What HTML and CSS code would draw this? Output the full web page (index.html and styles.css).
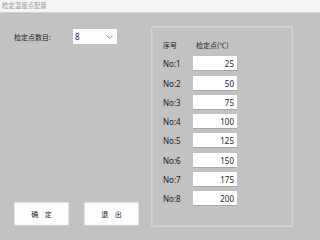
FILE: index.html
```html
<!DOCTYPE html>
<html lang="zh">
<head>
<meta charset="utf-8">
<link rel="stylesheet" href="styles.css">
</head>
<body>
<div class="window">
  <div class="titlebar">检定温度点配置</div>
  <div class="main">
    <div class="left">
      <div class="count-row">
        <span class="label cjk">检定点数目:</span>
        <div class="select">
          <span class="select-val">8</span>
          <svg class="chev" width="7" height="4" viewBox="0 0 7 4"><path d="M0.5 0.5 L3.5 3.3 L6.5 0.5" fill="none" stroke="#8a8a8a" stroke-width="0.9"/></svg>
        </div>
      </div>
      <div class="buttons">
        <button class="btn cjk">确&nbsp;&nbsp;&nbsp;&nbsp;定</button>
        <button class="btn cjk">退&nbsp;&nbsp;&nbsp;&nbsp;出</button>
      </div>
    </div>
    <div class="group">
      <div class="grid">
        <div class="hdr cjk">序号</div>
        <div class="hdr hdr2 cjk">检定点(℃)</div>
        <div class="no">No:1</div><div class="inp">25</div>
        <div class="no">No:2</div><div class="inp">50</div>
        <div class="no">No:3</div><div class="inp">75</div>
        <div class="no">No:4</div><div class="inp">100</div>
        <div class="no">No:5</div><div class="inp">125</div>
        <div class="no">No:6</div><div class="inp">150</div>
        <div class="no">No:7</div><div class="inp">175</div>
        <div class="no">No:8</div><div class="inp">200</div>
      </div>
    </div>
  </div>
</div>
</body>
</html>
```
FILE: styles.css
```css
html, body {
  margin: 0;
  padding: 0;
  background: #c2c2c2;
}
body {
  height: 238px;
  font-family: "Noto Sans", "Noto Sans CJK SC", sans-serif;
  font-size: 8px;
  color: #1e1e1e;
  overflow: hidden;
}
.window {
  display: flex;
  flex-direction: column;
  height: 238px;
}
.cjk {
  font-family: "Noto Sans CJK SC", sans-serif;
  font-size: 7px;
}
.titlebar {
  box-sizing: border-box;
  height: 13px;
  line-height: 12px;
  background: #f4f4f4;
  border-bottom: 1px solid #d4d4d4;
  color: #9a9a9a;
  font-family: "Noto Sans CJK SC", sans-serif;
  font-size: 6.4px;
  padding-left: 2px;
}
.main {
  flex: 1;
  display: flex;
  padding-top: 13px;
}
.left {
  width: 137px;
  padding-left: 14px;
  display: flex;
  flex-direction: column;
  justify-content: space-between;
  padding-bottom: 12px;
}
.count-row {
  display: flex;
  align-items: center;
  margin-top: 3px;
  height: 15px;
}
.label {
  width: 59px;
  color: #1e1e1e;
}
.select {
  width: 44px;
  height: 15px;
  background: #fdfdfd;
  box-sizing: border-box;
  display: flex;
  align-items: center;
  justify-content: space-between;
  padding: 0 4px 0 2px;
}
.select-val {
  font-size: 8px;
  color: #1e1e1e;
}
.chev {
  display: block;
}
.buttons {
  display: flex;
  gap: 15px;
}
.btn {
  width: 55px;
  height: 24px;
  background: #fdfdfd;
  border: 1px solid #e4e4e4;
  border-bottom-color: #cfcfcf;
  border-radius: 2px;
  color: #1e1e1e;
  padding: 0;
  margin: 0;
  font-size: 7px;
  line-height: 22px;
}
.group {
  width: 142px;
  height: 201px;
  box-sizing: border-box;
  border: 1px solid #d6d6d6;
  border-radius: 2px;
  box-shadow: inset 0 0 0 1px #cbcbcb;
  padding: 10px 0 0 11px;
}
.grid {
  display: grid;
  grid-template-columns: 30px 44px;
  grid-auto-rows: 15px;
  row-gap: 4.3px;
  align-items: center;
}
.hdr {
  line-height: 10px;
}
.hdr2 {
  padding-left: 3px;
}
.no {
  font-size: 8px;
  color: #1e1e1e;
}
.inp {
  height: 15px;
  line-height: 15px;
  background: #ffffff;
  border-bottom: 1px solid #a9a9a9;
  box-sizing: border-box;
  text-align: right;
  padding-right: 3px;
  font-size: 8px;
  color: #1e1e1e;
}
```
